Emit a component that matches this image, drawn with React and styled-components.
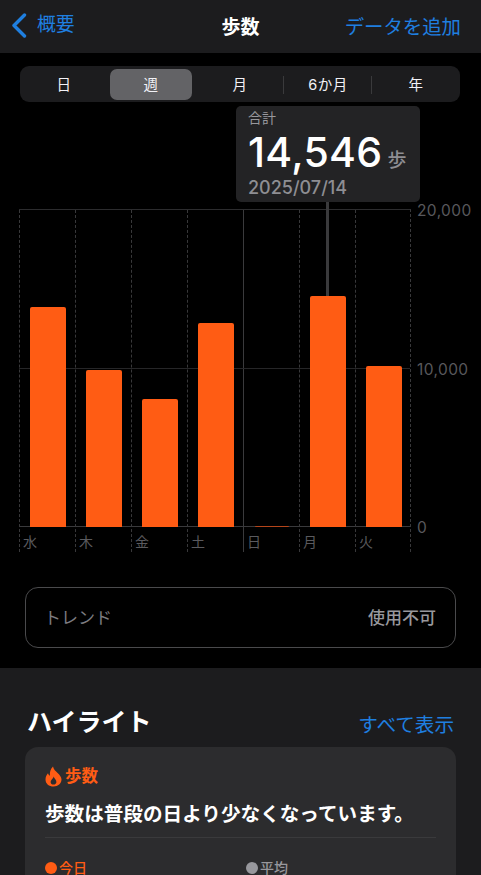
import React from "react";
import styled, { createGlobalStyle } from "styled-components";

const days = [
  { label: "水", top: 307 },
  { label: "木", top: 370 },
  { label: "金", top: 399 },
  { label: "土", top: 323 },
  { label: "日", top: 525.5, solid: true, tiny: true },
  { label: "月", top: 296 },
  { label: "火", top: 366 },
];

const tabs = ["日", "週", "月", "6か月", "年"];

const App = () => {
  return (
    <Page>
      <GlobalStyle />
      <Header>
        <BackLink>
          <svg width="16" height="25" viewBox="0 0 16 25" fill="none">
            <path d="M13.5 2 L3 12.5 L13.5 23" stroke="#1f7fe0" strokeWidth="3.4" strokeLinecap="round" strokeLinejoin="round" />
          </svg>
          <span>概要</span>
        </BackLink>
        <Title>歩数</Title>
        <HeaderAction>データを追加</HeaderAction>
      </Header>

      <Main>
        <Segments>
          {tabs.map((tab, i) => (
            <Segment key={tab} $active={i === 1} $divider={i === 3 || i === 4}>
              {tab}
            </Segment>
          ))}
        </Segments>

        <ChartArea>
          <Tooltip>
            <TipLabel>合計</TipLabel>
            <TipValue>
              14,546<TipUnit>歩</TipUnit>
            </TipValue>
            <TipDate>2025/07/14</TipDate>
          </Tooltip>
          <Pointer />
          <Plot>
            <MidLine />
            {days.map((d) => (
              <DayColumn key={d.label} $solid={d.solid}>
                <Bars>
                  <Bar $tiny={d.tiny} style={{ height: 527 - d.top }} />
                </Bars>
                <DayLabel>{d.label}</DayLabel>
              </DayColumn>
            ))}
            <AxisLabel $y={-8}>20,000</AxisLabel>
            <AxisLabel $y={151}>10,000</AxisLabel>
            <AxisLabel $y={309}>0</AxisLabel>
          </Plot>
        </ChartArea>

        <TrendCard>
          <TrendLabel>トレンド</TrendLabel>
          <TrendValue>使用不可</TrendValue>
        </TrendCard>
      </Main>

      <Highlights>
        <SectionHead>
          <SectionTitle>ハイライト</SectionTitle>
          <SectionLink>すべて表示</SectionLink>
        </SectionHead>
        <HighlightCard>
          <CardTag>
            <svg width="17" height="21" viewBox="0 0 17 21">
              <path
                fillRule="evenodd"
                fill="#ff5c14"
                d="M8 0.5 C8.6 3.6 10.6 5 12.6 7 C14.8 9.2 16.5 11 16.5 13.6 C16.5 17.8 13 20.5 8.6 20.5 C4 20.5 0.5 17.6 0.5 13.4 C0.5 10.8 1.6 8.8 3 7.2 C3.4 8.4 3.9 9.2 4.9 9.8 C4.6 6.4 5.4 3 8 0.5 Z M8.6 10.6 C8.4 12 7.6 12.6 6.8 13.6 C6 14.5 5.6 15.2 5.6 16 C5.6 17.6 6.9 18.6 8.5 18.6 C10.2 18.6 11.4 17.5 11.4 16 C11.4 14 9.4 12.8 8.6 10.6 Z"
              />
            </svg>
            歩数
          </CardTag>
          <CardText>歩数は普段の日より少なくなっています。</CardText>
          <CardRule />
          <Legend>
            <LegendItem $color="#ff5c14">今日</LegendItem>
            <LegendItem $color="#98989d">平均</LegendItem>
          </Legend>
        </HighlightCard>
      </Highlights>
    </Page>
  );
};

const GlobalStyle = createGlobalStyle`
  html, body {
    margin: 0;
    padding: 0;
    background: #000;
  }
  body {
    font-family: "Inter", "Noto Sans CJK JP", sans-serif;
  }
`;

const Page = styled.div`
  width: 481px;
  height: 875px;
  overflow: hidden;
  background: #000;
  color: #fff;
`;

const Header = styled.header`
  height: 53px;
  padding: 0 20px 2px 11px;
  background: #1c1c1e;
  display: grid;
  grid-template-columns: 1fr auto 1fr;
  align-items: center;
  box-sizing: border-box;
`;

const BackLink = styled.div`
  display: flex;
  align-items: center;
  gap: 10px;
  color: #1f7fe0;
  font-size: 18.8px;
  line-height: 1;
`;

const Title = styled.div`
  font-size: 19px;
  font-weight: 700;
  margin-left: 9px;
`;

const HeaderAction = styled.div`
  justify-self: end;
  color: #1f7fe0;
  font-size: 19.4px;
  white-space: nowrap;
`;

const Main = styled.main`
  height: 615px;
  padding-top: 13px;
  box-sizing: border-box;
`;

const Segments = styled.div`
  width: 440px;
  height: 36px;
  margin-left: 20px;
  background: #1c1c1e;
  border-radius: 9px;
  display: grid;
  grid-template-columns: repeat(5, 1fr);
  align-items: center;
`;

const Segment = styled.div`
  position: relative;
  height: 31px;
  margin: ${(p) => (p.$active ? "0 4px 0 2px" : "0")};
  padding-bottom: 2px;
  box-sizing: border-box;
  display: flex;
  align-items: center;
  justify-content: center;
  font-size: 14.5px;
  letter-spacing: 0.5px;
  color: #f2f2f7;
  border-radius: 7px;
  background: ${(p) => (p.$active ? "#636366" : "transparent")};
  &::before {
    content: "";
    display: ${(p) => (p.$divider ? "block" : "none")};
    position: absolute;
    left: -1px;
    top: 7px;
    width: 1px;
    height: 18px;
    background: #3a3a3c;
  }
`;

const ChartArea = styled.section`
  position: relative;
  height: 485px;
`;

const Tooltip = styled.div`
  position: absolute;
  left: 236px;
  top: 4px;
  z-index: 2;
  width: 184px;
  height: 96px;
  padding: 3px 12px 0;
  box-sizing: border-box;
  background: #232325;
  border-radius: 5px;
`;

const TipLabel = styled.div`
  font-size: 14px;
  line-height: 18px;
  color: #98989d;
`;

const TipValue = styled.div`
  margin-top: 2px;
  font-size: 41px;
  line-height: 46px;
  font-weight: 500;
  letter-spacing: 0.3px;
  white-space: nowrap;
`;

const TipUnit = styled.span`
  margin-left: 5px;
  font-size: 19px;
  line-height: 1;
  font-weight: 500;
  color: #8e8e93;
  letter-spacing: 0;
`;

const TipDate = styled.div`
  margin-top: 1px;
  font-size: 18px;
  line-height: 24px;
  font-weight: 500;
  color: #8e8e93;
`;

const Pointer = styled.div`
  position: absolute;
  left: 326px;
  top: 100px;
  z-index: 1;
  width: 3px;
  height: 94px;
  background: #3a3a3c;
`;

const Plot = styled.div`
  position: absolute;
  left: 19px;
  top: 107px;
  width: 392px;
  height: 343px;
  display: grid;
  grid-template-columns: repeat(7, 56px);
  border-top: 1px solid #2c2c2e;
  border-right: 1px dashed #38383a;
  box-sizing: border-box;
`;

const MidLine = styled.div`
  position: absolute;
  left: 0;
  right: 0;
  top: 158px;
  height: 1px;
  background: #262628;
`;

const DayColumn = styled.div`
  display: flex;
  flex-direction: column;
  border-left: 1px ${(p) => (p.$solid ? "solid #3a3a3c" : "dashed #38383a")};
`;

const Bars = styled.div`
  position: relative;
  height: 317px;
  display: flex;
  align-items: flex-end;
  padding-left: 9.5px;
  border-bottom: 1px solid #3a3a3c;
  box-sizing: border-box;
`;

const Bar = styled.div`
  position: relative;
  z-index: 1;
  width: ${(p) => (p.$tiny ? "34px" : "36px")};
  margin-left: ${(p) => (p.$tiny ? "1px" : "0")};
  background: ${(p) => (p.$tiny ? "#b5451a" : "#ff5c14")};
  border-radius: 2px 2px 0 0;
  margin-bottom: -1px;
`;

const DayLabel = styled.div`
  padding: 6px 0 0 3px;
  font-size: 14px;
  line-height: 18px;
  color: #5a5a5e;
`;

const AxisLabel = styled.div`
  position: absolute;
  left: 398px;
  top: ${(p) => p.$y}px;
  font-size: 15.5px;
  line-height: 18px;
  color: #58585c;
  letter-spacing: 0.4px;
`;

const TrendCard = styled.div`
  width: 431px;
  height: 61px;
  margin-left: 25px;
  padding: 0 19px 2px 18px;
  box-sizing: border-box;
  display: flex;
  align-items: center;
  justify-content: space-between;
  border: 1px solid #4a4a4c;
  border-radius: 13px;
`;

const TrendLabel = styled.div`
  font-size: 17px;
  color: #7c7c80;
`;

const TrendValue = styled.div`
  font-size: 17px;
  font-weight: 500;
  color: #98989d;
`;

const Highlights = styled.section`
  height: 207px;
  padding-top: 34px;
  background: #1c1c1e;
  box-sizing: border-box;
`;

const SectionHead = styled.div`
  display: flex;
  align-items: center;
  justify-content: space-between;
  height: 45px;
  padding: 0 27px 5px 27px;
  box-sizing: border-box;
`;

const SectionTitle = styled.h2`
  margin: 0;
  font-size: 25px;
  font-weight: 700;
  line-height: 32px;
`;

const SectionLink = styled.div`
  font-size: 19.6px;
  margin-top: 3px;
  color: #1f7fe0;
`;

const HighlightCard = styled.article`
  width: 431px;
  margin: 0 0 0 25px;
  padding: 19px 20px;
  box-sizing: border-box;
  background: #2c2c2e;
  border-radius: 13px;
`;

const CardTag = styled.div`
  display: flex;
  align-items: center;
  gap: 3px;
  color: #ff5c14;
  font-size: 16.5px;
  font-weight: 700;
  line-height: 21px;
`;

const CardText = styled.p`
  margin: 15px 0 0;
  font-size: 19.6px;
  font-weight: 600;
  line-height: 25px;
  white-space: nowrap;
`;

const CardRule = styled.div`
  height: 1px;
  margin-top: 10px;
  background: #3a3a3c;
`;

const Legend = styled.div`
  display: grid;
  grid-template-columns: 201px 1fr;
  margin-top: 20px;
`;

const LegendItem = styled.div`
  display: flex;
  align-items: center;
  gap: 2px;
  font-size: 14px;
  font-weight: 500;
  line-height: 20px;
  color: ${(p) => p.$color};
  &::before {
    content: "";
    width: 12px;
    height: 12px;
    border-radius: 50%;
    background: ${(p) => p.$color};
  }
`;

export default App;
